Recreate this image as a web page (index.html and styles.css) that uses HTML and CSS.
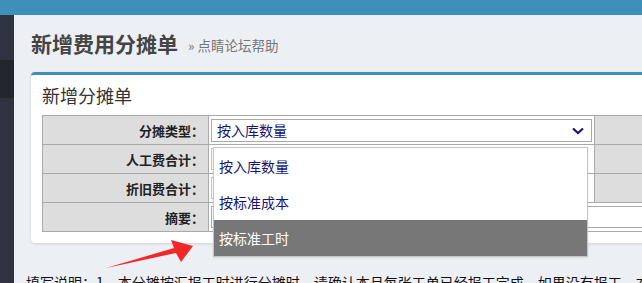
FILE: index.html
```html
<!DOCTYPE html>
<html lang="zh-CN">
<head>
    <meta charset="UTF-8">
    <title>新增费用分摊单</title>
    <link rel="stylesheet" href="styles.css">
</head>
<body>
<div class="topbar"></div>
<div class="layout">
    <div class="sidebar">
        <div class="sidebar-active"></div>
    </div>
    <div class="main">
        <div class="page-header">
            <h1>新增费用分摊单</h1>
            <span class="help">» 点睛论坛帮助</span>
        </div>

        <div class="panel">
            <div class="panel-title">新增分摊单</div>
            <table class="form-table">
                <tr>
                    <th>分摊类型：</th>
                    <td>
                        <div class="select">
                            <span>按入库数量</span>
                            <svg class="chevron" width="12" height="8" viewBox="0 0 12 8">
                                <polyline points="1,1.5 6,6 11,1.5" fill="none" stroke="#14147a" stroke-width="2.2"/>
                            </svg>
                        </div>
                    </td>
                    <th class="blank"></th>
                </tr>
                <tr>
                    <th>人工费合计：</th>
                    <td><div class="input"></div></td>
                    <th class="blank"></th>
                </tr>
                <tr>
                    <th>折旧费合计：</th>
                    <td><div class="input"></div></td>
                    <th class="blank"></th>
                </tr>
                <tr>
                    <th>摘要：</th>
                    <td colspan="2"><div class="input wide"></div></td>
                </tr>
            </table>

            <!-- open dropdown of the select -->
            <div class="dropdown">
                <div class="option">按入库数量</div>
                <div class="option">按标准成本</div>
                <div class="option selected">按标准工时</div>
            </div>
        </div>

        <p class="note">填写说明：1、本分摊按汇报工时进行分摊时，请确认本月每张工单已经报工完成，如果没有报工，本费用将无法分摊。</p>
    </div>
</div>

<svg class="arrow" width="642" height="283" viewBox="0 0 642 283">
    <polygon points="106,268 174,248 171,240 193,246 181,262 176,253" fill="#f02828"/>
</svg>
</body>
</html>
```

FILE: styles.css
```css
/* Page frame */
body {
    margin: 0;
    width: 642px;
    height: 283px;
    overflow: hidden;
    position: relative;
    background-color: #eceff4;
    font-family: "Noto Sans CJK SC", "Noto Sans", sans-serif;
    color: #222;
}
.topbar {
    height: 15px;
    background-color: #3d90ba;
}
.layout {
    display: flex;
    height: 268px;
}
.sidebar {
    width: 14px;
    flex-shrink: 0;
    background-color: #2f3340;
}
.sidebar-active {
    margin-top: 45px;
    height: 38px;
    background-color: #22272f;
}
.main {
    flex: 1;
    min-width: 0;
    padding-left: 17px;
}

/* Header */
.page-header {
    height: 57px;
    display: flex;
    align-items: center;
    gap: 10px;
    padding-bottom: 2px;
    box-sizing: border-box;
}
.page-header h1 {
    margin: 0;
    font-size: 21px;
    font-weight: bold;
    color: #444;
}
.help {
    font-size: 13.5px;
    color: #777;
    padding-top: 4px;
}

/* Panel */
.panel {
    position: relative;
    width: 640px;
    background-color: #fff;
    border-top: 3px solid #3d90ba;
    border-radius: 4px;
    box-shadow: 0 1px 3px rgba(0, 0, 0, 0.12);
    padding: 0 0 11px 11px;
}
.panel-title {
    height: 40px;
    line-height: 40px;
    font-size: 18px;
    color: #333;
}
.form-table {
    border-collapse: collapse;
    width: 640px;
    table-layout: fixed;
}
.form-table th,
.form-table td {
    border: 1px solid #aaa;
    height: 28px;
    padding: 0;
}
.form-table th {
    width: 166px;
    background-color: #dddddd;
    text-align: right;
    font-size: 13px;
    font-weight: bold;
    color: #222;
    padding-right: 4px;
    box-sizing: border-box;
}
.form-table td {
    width: 381px;
    padding: 0 2px;
}
.form-table th.blank {
    width: auto;
}

.select {
    height: 23px;
    border: 1px solid #a9a9a9;
    box-sizing: border-box;
    display: flex;
    align-items: center;
    justify-content: space-between;
    padding: 0 7px 0 5px;
    font-size: 14px;
    color: #14147a;
}
.chevron {
    margin-top: 1px;
}
.input {
    height: 22px;
    width: 376px;
    border: 1px solid #c8c8c8;
    box-sizing: border-box;
}
.input.wide {
    width: auto;
    border-color: #aaa;
}

/* Open dropdown list */
.dropdown {
    position: absolute;
    left: 182px;
    top: 72px;
    width: 373px;
    background-color: #fff;
    border: 1px solid #c4c4c4;
    box-shadow: 0 1px 2px rgba(0, 0, 0, 0.1);
}
.option {
    height: 36px;
    line-height: 36px;
    padding-left: 5px;
    font-size: 14px;
    color: #14147a;
}
.option.selected {
    background-color: #777;
    color: #fff;
}

.note {
    margin: 29px 0 0 -5px;
    font-size: 14px;
    line-height: 20px;
    white-space: nowrap;
    color: #111;
}

.arrow {
    position: absolute;
    left: 0;
    top: 0;
    pointer-events: none;
}
```
